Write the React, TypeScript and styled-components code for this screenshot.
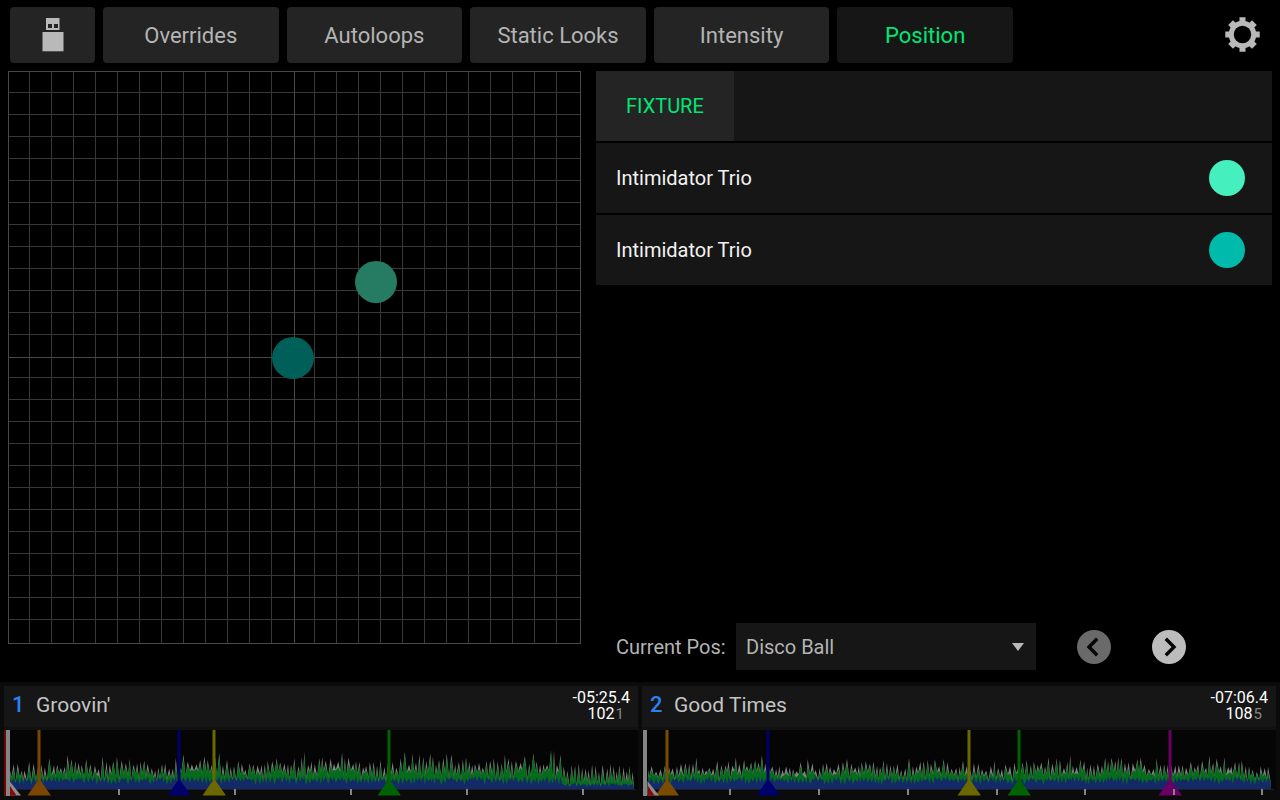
import React, { useState } from 'react';
import styled, { createGlobalStyle } from 'styled-components';

const GlobalStyle = createGlobalStyle`
  *, *::before, *::after { box-sizing: border-box; }
  body {
    margin: 0;
    background: #000;
    color: #b4b4b4;
    font-family: Roboto, "Liberation Sans", sans-serif;
    font-size: 20px;
    line-height: 24px;
  }
  button, select { font: inherit; color: inherit; border: 0; margin: 0; padding: 0; }
  button { cursor: pointer; background: none; }
  svg { display: block; }
`;

const Screen = styled.div`
  display: flex;
  flex-direction: column;
  min-height: 100vh;
`;

const TopBar = styled.header`
  display: flex;
  align-items: center;
  gap: 8px;
  padding: 7px 20px 8px 10px;
`;

const ModeNav = styled.nav`
  flex: 1;
  max-width: 910px;
  display: grid;
  grid-template-columns: repeat(5, minmax(0, 1fr));
  gap: 8px;
`;

const BarButton = styled.button<{ $active?: boolean }>`
  height: 56px;
  padding-top: 1px;
  border-radius: 4px;
  font-size: 22px;
  background: ${(p) => (p.$active ? '#161616' : '#242424')};
  color: ${(p) => (p.$active ? '#00e676' : '#b4b4b4')};
`;

const UsbButton = styled(BarButton)`
  display: flex;
  align-items: center;
  justify-content: center;
  width: 85px;
  padding: 0;
`;

const SettingsButton = styled.button`
  margin-left: auto;
`;

const Main = styled.main`
  flex: 1;
  display: grid;
  grid-template-columns: minmax(0, 573fr) minmax(0, 676fr);
  gap: 15px;
  padding: 0 8px 12px;
`;

const PadSvg = styled.svg`
  width: 100%;
  height: auto;
`;

const Side = styled.section`
  display: flex;
  flex-direction: column;
  gap: 2px;
`;

const TabBar = styled.div`
  display: flex;
  height: 70px;
  background: #161616;
`;

const Tab = styled.button`
  padding: 0 30px;
  background: #242424;
  color: #00e676;
`;

const FixtureList = styled.ul`
  display: flex;
  flex-direction: column;
  gap: 2px;
  margin: 0;
  padding: 0;
  list-style: none;
`;

const FixtureRow = styled.li`
  display: flex;
  align-items: center;
  justify-content: space-between;
  height: 70px;
  padding: 0 27px 0 20px;
  background: #161616;
  color: #f2f2f2;
`;

const Swatch = styled.span<{ $color: string }>`
  width: 36px;
  height: 36px;
  border-radius: 50%;
  background: ${(p) => p.$color};
`;

const PositionBar = styled.div`
  display: flex;
  align-items: center;
  margin-top: auto;
  padding-left: 20px;
`;

const PositionLabel = styled.label`
  width: 120px;
  white-space: nowrap;
`;

const SelectBox = styled.div`
  position: relative;
  width: 300px;
`;

const PositionSelect = styled.select`
  appearance: none;
  display: block;
  width: 100%;
  height: 47px;
  padding: 0 40px 0 10px;
  border-radius: 0;
  background: #161616;
`;

const SelectArrow = styled.svg`
  position: absolute;
  right: 12px;
  top: 20px;
  pointer-events: none;
`;

const StepButton = styled.button`
  margin-left: 41px;
  border-radius: 50%;
`;

const DeckBar = styled.footer`
  display: grid;
  grid-template-columns: repeat(2, minmax(0, 1fr));
  gap: 4px;
  padding: 4px;
  background: #0b0b0b;
`;

const DeckInfo = styled.div`
  display: flex;
  align-items: center;
  height: 44px;
  padding: 0 8px 3px;
  background: #161616;
  border-bottom: 3px solid #111;
`;

const DeckNumber = styled.span`
  width: 24px;
  font-size: 22px;
  font-weight: 500;
  color: #2a82f0;
`;

const DeckTitle = styled.span`
  flex: 1;
  font-size: 21px;
  color: #c4c4c4;
`;

const DeckCounter = styled.div`
  display: flex;
  flex-direction: column;
  padding-top: 2px;
  font-size: 16px;
  line-height: 16px;
  text-align: right;
  color: #fff;
`;

const Beats = styled.span`
  padding-right: 6px;
  small { margin-left: 1px; font-size: 15px; color: #858585; }
`;

const WaveSvg = styled.svg`
  width: 100%;
  height: auto;
  background: #050505;
`;

const modes = ['Overrides', 'Autoloops', 'Static Looks', 'Intensity', 'Position'];

const fixtures = [
  { name: 'Intimidator Trio', color: '#46efbe', dot: '#267c62', x: 368, y: 211 },
  { name: 'Intimidator Trio', color: '#00baac', dot: '#005f58', x: 285, y: 287 },
];

const gridLines = Array.from({ length: 12 }, (_, i) => [21 + 22 * i, 306 + 22 * i]).flat();

function PositionPad() {
  return (
    <PadSvg viewBox="0 0 573 573" role="img" aria-label="Fixture positions">
      <g shapeRendering="crispEdges" fill="#383838">
        {gridLines.map((n) => (
          <React.Fragment key={n}>
            <rect x={n} y={0} width={1} height={573} />
            <rect x={0} y={n} width={573} height={1} />
          </React.Fragment>
        ))}
        <g fill="#484848">
          <rect x={286} y={0} width={1} height={573} />
          <rect x={0} y={286} width={573} height={1} />
          <path d="M0 0H573V573H0ZM1 1V572H572V1Z" fillRule="evenodd" />
        </g>
      </g>
      {fixtures.map((f) => (
        <circle key={f.color} cx={f.x} cy={f.y} r={21} fill={f.dot} />
      ))}
    </PadSvg>
  );
}

function UsbIcon() {
  return (
    <svg width="22" height="34" viewBox="0 0 22 34" fill="#b9b9b9" aria-hidden="true">
      <path fillRule="evenodd" d="M4 0H17.5V12H4ZM6 6V10H10V6ZM12 6V10H16V6Z" />
      <rect x="0.5" y="14" width="21" height="19.3" />
    </svg>
  );
}

function GearIcon() {
  return (
    <svg width="35" height="36" viewBox="-17.5 -17.5 35 36" fill="#b9b9b9" aria-hidden="true">
      {[0, 45, 90, 135].map((a) => (
        <path
          key={a}
          transform={`rotate(${a})`}
          d={a % 90 === 0
            ? 'M-3 -17.2H3V-13L5 -11V11L3 13V17.2H-3V13L-5 11V-11L-3 -13Z'
            : 'M-3.4 -16.8H3.4V16.8H-3.4Z'}
        />
      ))}
      <circle r="13.8" />
      <circle r="8.7" fill="#000" />
    </svg>
  );
}

function StepIcon({ back }: { back?: boolean }) {
  return (
    <svg width="34" height="34" viewBox="0 0 34 34" fill="none" aria-hidden="true">
      <circle cx="17" cy="17" r="17" fill={back ? '#6a6a6a' : '#bcbcbc'} />
      <path
        d={back ? 'M20.2 8.8L12 17L20.2 25.2' : 'M13.8 8.8L22 17L13.8 25.2'}
        stroke="#050505"
        strokeWidth="3.4"
      />
    </svg>
  );
}

type Cue = { x: number; color: string };
type Deck = {
  id: number;
  title: string;
  time: string;
  beats: string;
  sub: string;
  end: number;
  envelope: number[];
  valley: number;
  drop: number;
  ticks: number[];
  cues: Cue[];
};

const decks: Deck[] = [
  {
    id: 1,
    title: "Groovin'",
    time: '-05:25.4',
    beats: '102',
    sub: '1',
    end: 630,
    envelope: [18, 21, 22, 25, 22, 26, 23, 20, 28, 27, 25, 22, 25, 26, 28, 29, 25, 23, 28, 29, 27, 24, 28, 29, 28, 27, 28, 28],
    valley: 0.34,
    drop: 557,
    ticks: [114, 230, 346, 462, 578],
    cues: [
      { x: 35, color: '#7a4600' },
      { x: 175, color: '#00006c' },
      { x: 210, color: '#6c6800' },
      { x: 385, color: '#006200' },
    ],
  },
  {
    id: 2,
    title: 'Good Times',
    time: '-07:06.4',
    beats: '108',
    sub: '5',
    end: 629,
    envelope: [17, 19, 23, 22, 25, 26, 20, 21, 22, 25, 25, 22, 22, 25, 23, 20, 21, 23, 25, 24, 24, 25, 25, 21, 25, 24, 25, 25],
    valley: 0.4,
    drop: 602,
    ticks: [87, 176, 265, 354, 442, 531, 619],
    cues: [
      { x: 25, color: '#7a4c00' },
      { x: 126, color: '#00006c' },
      { x: 327, color: '#6c6800' },
      { x: 377, color: '#006200' },
      { x: 528, color: '#680066' },
    ],
  },
];

// Seeded noise keeps each track's waveform identical between renders.
function buildWave(deck: Deck) {
  let seed = deck.id * 7919;
  const rand = () => {
    seed = (seed * 1103515245 + 12345) % 2147483648;
    return seed / 2147483648;
  };
  const start = 'M6 59';
  let high = start;
  let mid = start;
  let low = start;
  let x = 6;
  let rising = true;
  while (x < deck.end) {
    const pos = x / 22.6;
    const i = Math.min(Math.floor(pos), deck.envelope.length - 2);
    const t = Math.min(pos - i, 1);
    const quiet = x > deck.drop;
    let peak = deck.envelope[i] * (1 - t) + deck.envelope[i + 1] * t;
    if (quiet) peak *= 0.72;
    const valley = quiet && deck.id === 1 ? 0.1 : deck.valley;
    let level = rising ? peak * (0.85 + 0.45 * rand()) : peak * (valley + 0.34 * rand());
    if (rising && rand() > 0.93) level = peak * 1.4;
    const midLevel = level - (rising ? 2 + rand() * 5 : rand());
    const bassTop = quiet && deck.id === 1 ? 7 : 13;
    const lowLevel = Math.min(midLevel, rising ? bassTop - rand() * 3 : bassTop * (0.3 + 0.4 * rand()));
    const px = x.toFixed(1);
    high += `L${px} ${(59 - level).toFixed(1)}`;
    mid += `L${px} ${(59 - midLevel).toFixed(1)}`;
    low += `L${px} ${(59 - lowLevel).toFixed(1)}`;
    x += 1.2 + rand() * 1.3;
    rising = !rising;
  }
  const close = `L${deck.end} 59Z`;
  return { high: high + close, mid: mid + close, low: low + close };
}

const waves = decks.map(buildWave);

function Waveform({ deck, index }: { deck: Deck; index: number }) {
  const wave = waves[index];
  return (
    <WaveSvg viewBox="0 0 634 66" role="img" aria-label={`${deck.title} waveform`}>
      <path d={wave.high} fill="#828282" />
      <path d={wave.mid} fill="#046c1a" />
      <path d={wave.low} fill="#142a68" />
      <rect x="0" y="59" width="632" height="1" fill="#1c1f28" />
      <rect x="0" y="60" width="634" height="6" fill="#0b0b0b" />
      {deck.cues.map((c) => (
        <path key={c.x} fill={c.color} d={`M${c.x - 1.5} 0h3V50.5L${c.x + 12} 65.5H${c.x - 11.5}L${c.x - 1.5} 51Z`} />
      ))}
      {deck.ticks.map((x) => (
        <rect key={x} x={x} y="59" width="2" height="6" fill="#858585" />
      ))}
      <path d="M5.5 51L17 65.5H5.5Z" fill="#8c8c8c" />
      <path d="M6 56L12.5 65.5H6Z" fill="#8a0808" />
      <rect x={deck.id === 1 ? 0 : 1} y="0" width={deck.id === 1 ? 2 : 1} height="66" fill="#6c0808" />
      <rect x={deck.id === 1 ? 2 : 1} y="0" width="4" height="66" fill="#858585" />
    </WaveSvg>
  );
}

export default function App() {
  const [mode, setMode] = useState('Position');
  return (
    <Screen>
      <GlobalStyle />
      <TopBar>
        <UsbButton aria-label="USB"><UsbIcon /></UsbButton>
        <ModeNav>
          {modes.map((m) => (
            <BarButton key={m} $active={m === mode} onClick={() => setMode(m)}>{m}</BarButton>
          ))}
        </ModeNav>
        <SettingsButton aria-label="Settings"><GearIcon /></SettingsButton>
      </TopBar>
      <Main>
        <PositionPad />
        <Side>
          <TabBar><Tab>FIXTURE</Tab></TabBar>
          <FixtureList>
            {fixtures.map((f) => (
              <FixtureRow key={f.color}>
                {f.name}
                <Swatch $color={f.color} />
              </FixtureRow>
            ))}
          </FixtureList>
          <PositionBar>
            <PositionLabel htmlFor="position">Current Pos:</PositionLabel>
            <SelectBox>
              <PositionSelect id="position" defaultValue="Disco Ball">
                <option>Disco Ball</option>
              </PositionSelect>
              <SelectArrow width="12" height="8" viewBox="0 0 12 8" aria-hidden="true">
                <path d="M0 0H12L6 8Z" fill="#b9b9b9" />
              </SelectArrow>
            </SelectBox>
            <StepButton aria-label="Previous position"><StepIcon back /></StepButton>
            <StepButton aria-label="Next position"><StepIcon /></StepButton>
          </PositionBar>
        </Side>
      </Main>
      <DeckBar>
        {decks.map((d, i) => (
          <section key={d.id}>
            <DeckInfo>
              <DeckNumber>{d.id}</DeckNumber>
              <DeckTitle>{d.title}</DeckTitle>
              <DeckCounter>
                <span>{d.time}</span>
                <Beats>{d.beats}<small>{d.sub}</small></Beats>
              </DeckCounter>
            </DeckInfo>
            <Waveform deck={d} index={i} />
          </section>
        ))}
      </DeckBar>
    </Screen>
  );
}
